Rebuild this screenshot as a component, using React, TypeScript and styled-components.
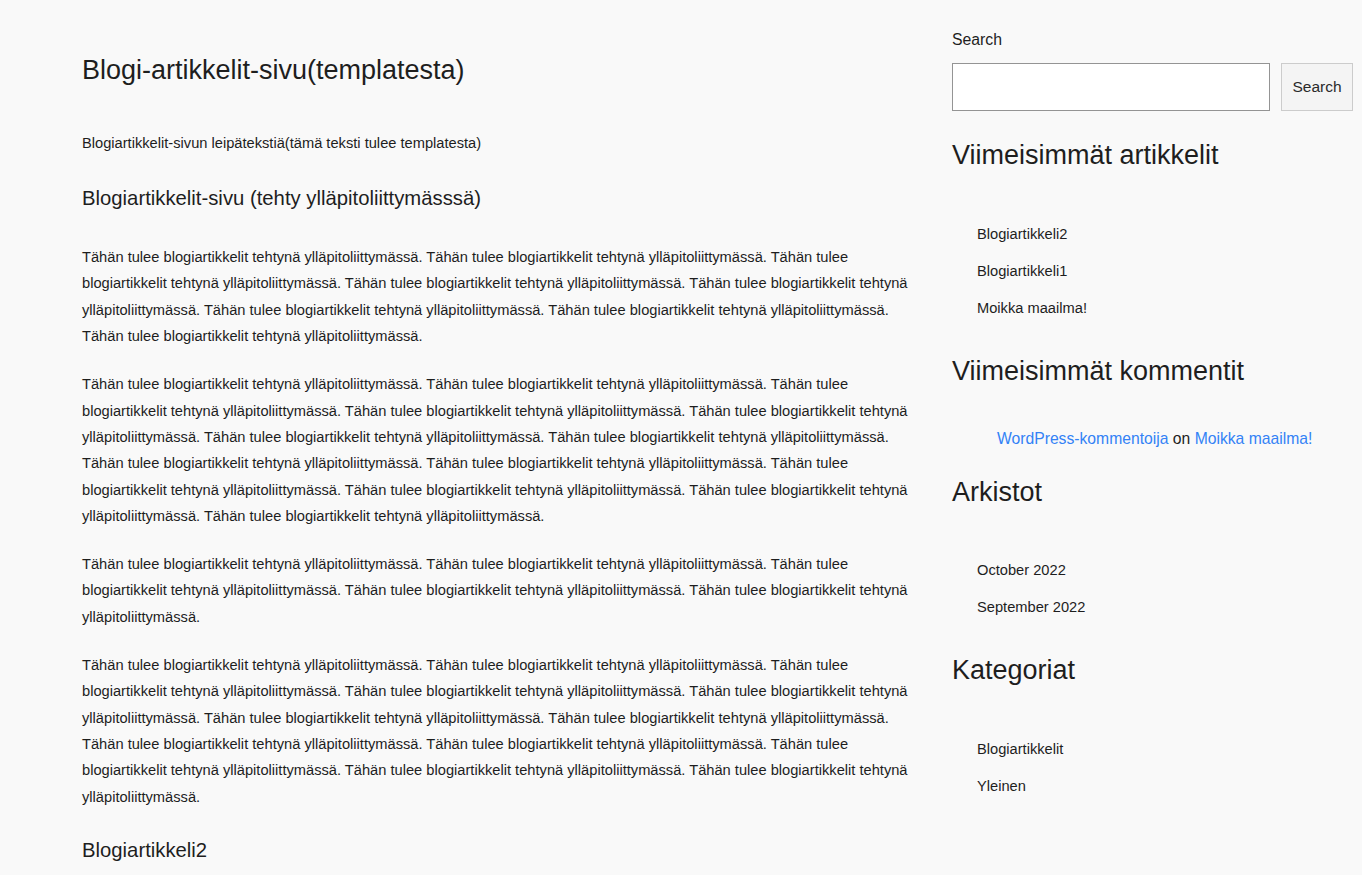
import React from "react";
import styled, { createGlobalStyle } from "styled-components";

const Global = createGlobalStyle`
  html, body { margin: 0; padding: 0; background: #f9f9f9; }
  body { font-family: "Liberation Sans", Arial, sans-serif; color: #1e1e1e; }
  * { box-sizing: border-box; }
`;

const Page = styled.div`
  display: grid;
  grid-template-columns: 828px 401px;
  column-gap: 42px;
  padding: 0 0 0 82px;
  align-items: start;
`;

const Main = styled.main`
  display: flex;
  flex-direction: column;
  padding-top: 54px;
`;

const Title = styled.h1`
  font-size: 27px;
  font-weight: 400;
  line-height: 32px;
  margin: 0 0 44px;
`;

const Lead = styled.p`
  font-size: 14.67px;
  line-height: 26px;
  margin: 0 0 30px;
`;

const SubHeading = styled.h2<{ $before?: number; $after?: number }>`
  font-size: 20.3px;
  font-weight: 400;
  line-height: 24px;
  margin: ${(p) => p.$before ?? 0}px 0 ${(p) => p.$after ?? 0}px;
`;

const Para = styled.p`
  font-size: 14.67px;
  line-height: 26.4px;
  margin: 0 0 21.5px;
`;

const Side = styled.aside`
  display: flex;
  flex-direction: column;
  padding-top: 30px;
`;

const Label = styled.label`
  font-size: 15.8px;
  line-height: 20px;
  margin-bottom: 13px;
`;

const SearchRow = styled.div`
  display: flex;
  gap: 11px;
  margin-bottom: 28px;
`;

const Input = styled.input`
  flex: 1;
  min-width: 0;
  height: 48px;
  border: 1px solid #949494;
  background: #fff;
  font: inherit;
`;

const Button = styled.button`
  flex: none;
  width: 72px;
  height: 48px;
  padding: 0;
  border: 1px solid #cccccc;
  background: #f4f4f4;
  color: #2a2a2a;
  font-family: "Liberation Sans", Arial, sans-serif;
  font-size: 15.5px;
`;

const WidgetTitle = styled.h2<{ $after: number }>`
  font-size: 27px;
  font-weight: 400;
  line-height: 32px;
  margin: 0 0 ${(p) => p.$after}px;
`;

const List = styled.ul`
  list-style: none;
  margin: 0 0 28px;
  padding: 0 0 0 25px;
`;

const Item = styled.li`
  font-size: 14.67px;
  line-height: 37px;
  color: #1e1e1e;
`;

const Comment = styled.div`
  font-size: 15.7px;
  line-height: 24px;
  padding-left: 45px;
  margin-bottom: 25px;
`;

const Link = styled.a`
  color: #3382f6;
  text-decoration: none;
`;

const sentence = "Tähän tulee blogiartikkelit tehtynä ylläpitoliittymässä.";
const rep = (n: number) => Array.from({ length: n }, () => sentence).join(" ");

export default function App() {
  return (
    <>
      <Global />
      <Page>
        <Main>
          <Title>Blogi-artikkelit-sivu(templatesta)</Title>
          <Lead>Blogiartikkelit-sivun leipätekstiä(tämä teksti tulee templatesta)</Lead>
          <SubHeading $after={34}>Blogiartikkelit-sivu (tehty ylläpitoliittymässsä)</SubHeading>
          <Para>{rep(8)}</Para>
          <Para>{rep(13)}</Para>
          <Para>{rep(5)}</Para>
          <Para>{rep(12)}</Para>
          <SubHeading $before={6}>Blogiartikkeli2</SubHeading>
        </Main>
        <Side>
          <Label htmlFor="s">Search</Label>
          <SearchRow>
            <Input id="s" type="text" />
            <Button>Search</Button>
          </SearchRow>
          <WidgetTitle $after={45}>Viimeisimmät artikkelit</WidgetTitle>
          <List>
            <Item>Blogiartikkeli2</Item>
            <Item>Blogiartikkeli1</Item>
            <Item>Moikka maailma!</Item>
          </List>
          <WidgetTitle $after={40}>Viimeisimmät kommentit</WidgetTitle>
          <Comment>
            <Link href="#">WordPress-kommentoija</Link> on <Link href="#">Moikka maailma!</Link>
          </Comment>
          <WidgetTitle $after={44}>Arkistot</WidgetTitle>
          <List>
            <Item>October 2022</Item>
            <Item>September 2022</Item>
          </List>
          <WidgetTitle $after={45}>Kategoriat</WidgetTitle>
          <List>
            <Item>Blogiartikkelit</Item>
            <Item>Yleinen</Item>
          </List>
        </Side>
      </Page>
    </>
  );
}
